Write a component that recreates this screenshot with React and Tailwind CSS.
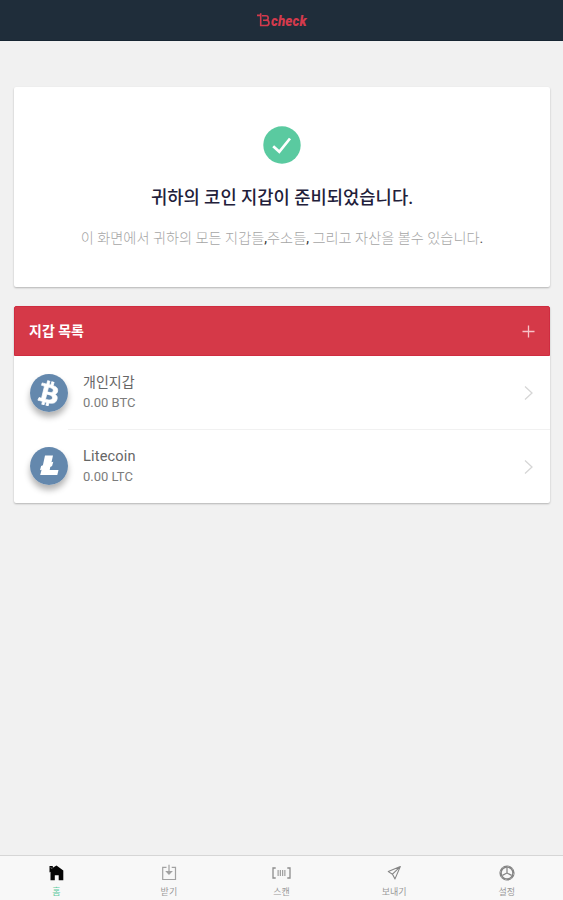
import { FaBtc } from "react-icons/fa";

const wallets = [
  { id: "btc", name: "개인지갑", balance: "0.00 BTC", icon: BitcoinIcon },
  { id: "ltc", name: "Litecoin", balance: "0.00 LTC", icon: LitecoinIcon },
];

const tabs = [
  { id: "home", label: "홈", icon: HomeIcon, active: true },
  { id: "receive", label: "받기", icon: ReceiveIcon },
  { id: "scan", label: "스캔", icon: ScanIcon },
  { id: "send", label: "보내기", icon: SendIcon },
  { id: "settings", label: "설정", icon: SettingsIcon },
];

function BitcoinIcon() {
  return (
    <div className="flex h-[38px] w-[38px] items-center justify-center rounded-full bg-[#6488ad]">
      <FaBtc className="h-[25px] w-[22px] rotate-14 stroke-white stroke-[14px] text-white" />
    </div>
  );
}

function LitecoinIcon() {
  return (
    <svg viewBox="0 0 38 38" className="h-[38px] w-[38px]">
      <circle cx="19" cy="19" r="19" fill="#6488ad" />
      <path
        d="M15 8.5h8l-1.5 6.8 1.8-.6-1.2 4.3-1.8.9-.6 3.1h8.8L27.3 28H10.2l1.4-5.3-1.6.6 1.1-4.2 1.8-.8z"
        fill="#fff"
      />
    </svg>
  );
}

function HomeIcon() {
  return (
    <svg viewBox="0 0 18 18" className="h-[18px] w-[18px]" fill="#050505">
      <path d="M2.5 2h3.3v1.8L9.5 1.5l6.8 5v9.7h-4.6v-5H7.8v5H3.5V7.8l-1 .7z" />
      <path d="M3.5 3.7l1.8.8" stroke="#aaa" strokeWidth=".7" />
    </svg>
  );
}

function ReceiveIcon() {
  return (
    <svg viewBox="0 0 18 18" className="h-[18px] w-[18px]" fill="none" stroke="#a2a2a2" strokeWidth="1.2">
      <path d="M6.5 3.3H2.7v12.2h12.8V3.3h-3.8M9 .8v8.7" />
      <path d="M6.6 7.5L9 10.1l2.5-2.6z" fill="#a2a2a2" />
    </svg>
  );
}

function ScanIcon() {
  return (
    <svg viewBox="0 0 20 18" className="h-[18px] w-5" fill="none" stroke="#8d8d8d">
      <path d="M4.7 4H2v10h2.7M16.3 4H19v10h-2.7" strokeWidth="1.3" />
      <path d="M7.1 6v6M9.3 6v6M11.7 6v6M13.9 6v6" strokeWidth="1" />
    </svg>
  );
}

function SendIcon() {
  return (
    <svg viewBox="0 0 18 18" className="h-[18px] w-[18px]" fill="none" stroke="#858585" strokeWidth="1.1">
      <path d="M15.3 2.6L3.3 7.6l4.2 2.6 2.5 4.7zM15.3 2.6l-7.8 7.6" strokeLinejoin="round" />
    </svg>
  );
}

function SettingsIcon() {
  return (
    <svg viewBox="0 0 18 18" className="h-[18px] w-[18px]" fill="none" stroke="#858585">
      <circle cx="9" cy="9" r="6.4" strokeWidth="2.4" />
      <circle cx="9" cy="9" r="6.9" stroke="#b5b5b5" strokeWidth="1" strokeDasharray="2 3.42" />
      <path d="M9 3.5V9l-4.6 2.4M9 9l4.6 2.4" strokeWidth="1.2" />
    </svg>
  );
}

function Logo() {
  return (
    <div className="flex items-center text-[#d33a4c]">
      <svg viewBox="0 0 14 14" className="h-3.5 w-3.5" fill="none" stroke="currentColor" strokeWidth="1.6">
        <path d="M0 2.4h4.5M3.7.3v12.2h5.6c3.6 0 3.6-5.2 0-5.2H6M5 2.8h4c2.9 0 2.9 4.5 0 4.5" />
      </svg>
      <span className="inline-block w-[36px] origin-left scale-x-[0.95] pt-px text-[14px] leading-none font-black tracking-[0.2px] italic">
        check
      </span>
    </div>
  );
}

function WalletRow({ wallet, divided }) {
  const Icon = wallet.icon;
  return (
    <li className="group flex h-[74px] pl-4 last:h-[73px]">
      <div className="flex w-[38px] shrink-0 pt-[18px] group-last:pt-[17px]">
        <div className="h-[38px] w-[38px] rounded-full shadow-[0_5px_6px_rgba(0,0,0,0.3)]">
          <Icon />
        </div>
      </div>
      <div
        className={
          divided
            ? "flex flex-1 items-center justify-between border-b border-[#f1f1f1] pr-[15px] pl-[15px]"
            : "flex flex-1 items-center justify-between pr-[15px] pl-[15px]"
        }
      >
        <div>
          <p className="text-[14.6px] leading-[21px] text-[#666]">
            <span className={divided ? "text-[14px]" : "tracking-[0.15px]"}>{wallet.name}</span>
          </p>
          <p className="text-[13px] leading-[20px] text-[#7c7c7c]">{wallet.balance}</p>
        </div>
        <svg viewBox="0 0 12 16" className="h-4 w-3" fill="none" stroke="#d6d6d6" strokeWidth="1.3">
          <path d="M2 1.5L9 8l-7 6.5" />
        </svg>
      </div>
    </li>
  );
}

export default function App() {
  return (
    <div className="flex h-[900px] w-full flex-col overflow-hidden bg-[#f1f1f1] font-[Roboto,'Noto_Sans_CJK_KR',sans-serif]">
      <header className="flex h-[41px] shrink-0 items-center justify-center border-b border-[#162532] bg-[#1f2d3a]">
        <Logo />
      </header>

      <main className="flex flex-1 flex-col gap-[19px] pt-[46px] pr-[13px] pl-3.5">
        <section className="flex h-[200px] flex-col items-center rounded-xs bg-white pt-[39px] shadow-[0_1px_2px_rgba(0,0,0,0.25)]">
          <svg viewBox="0 0 38 38" className="h-[38px] w-[38px]">
            <circle cx="19" cy="19" r="18.7" fill="#5acaa0" />
            <path d="M10.2 20.2l6.1 5.6L27 12.5" fill="none" stroke="#fff" strokeWidth="2.7" />
          </svg>
          <h1 className="mt-[21px] text-[17.7px] leading-[26px] font-medium whitespace-nowrap text-[#22203a]">
            귀하의 코인 지갑이 준비되었습니다.
          </h1>
          <p className="mt-[17px] text-[14.2px] leading-[20px] font-light whitespace-nowrap text-[#a5a5a5]">
            이 화면에서 귀하의 모든 지갑들<span className="font-normal text-[#333]">,</span>주소들
            <span className="font-normal text-[#333]">,</span> 그리고 자산을 볼수 있습니다
            <span className="font-normal text-[#555]">.</span>
          </p>
        </section>

        <section className="rounded-xs bg-white shadow-[0_1px_2px_rgba(0,0,0,0.25)]">
          <div className="flex h-[50px] items-center justify-between rounded-t-xs border border-[#cf2c40] bg-[#d53948] px-3.5 text-white">
            <h2 className="text-[14px] font-bold">지갑 목록</h2>
            <svg viewBox="0 0 13 13" className="h-[13px] w-[13px]" stroke="#f7c3c8" strokeWidth="1.3">
              <path d="M6.5.5v12M.5 6.5h12" />
            </svg>
          </div>
          <ul className="h-[147px]">
            {wallets.map((wallet, i) => (
              <WalletRow key={wallet.id} wallet={wallet} divided={i < wallets.length - 1} />
            ))}
          </ul>
        </section>
      </main>

      <nav className="grid h-[45px] shrink-0 grid-cols-5 border-t border-[#d6d6d6] bg-[#f8f8f8]">
        {tabs.map(({ id, label, icon: Icon, active }) => (
          <div key={id} className="flex flex-col items-center pt-2">
            <Icon />
            <span
              className={
                active
                  ? "mt-1 text-[9px] leading-[13px] text-[#5acaa0]"
                  : "mt-1 text-[9px] leading-[13px] text-[#999]"
              }
            >
              {label}
            </span>
          </div>
        ))}
      </nav>
    </div>
  );
}
